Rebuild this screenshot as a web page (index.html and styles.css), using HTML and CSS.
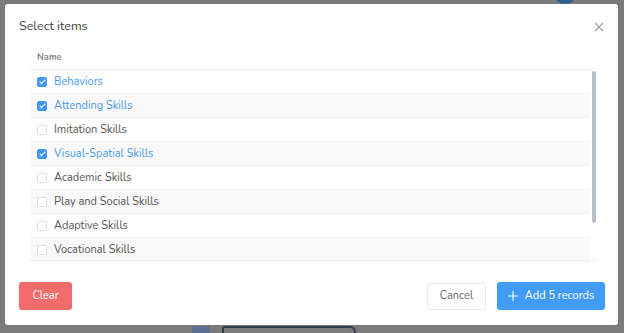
FILE: index.html
```
<!DOCTYPE html>
<html>
  <head>
    <meta charset="utf-8">
    <title>Select items</title>
    <link rel="stylesheet" href="styles.css">
  </head>
  <body>
    <div class="backdrop">
      <div class="peek peek-avatar"></div>
      <div class="peek peek-tile"></div>
      <div class="peek peek-art"></div>
      <div class="modal">
        <div class="modal-head">
          <span class="title">Select items</span>
          <svg class="close" width="10" height="10" viewBox="0 0 10 10">
            <path d="M1 1L9 9M9 1L1 9" stroke="#9c9c9c" stroke-width="1.1" fill="none"/>
          </svg>
        </div>
        <div class="table">
          <div class="thead">Name</div>
          <div class="tbody">
            <div class="row on"><span class="box"></span>Behaviors</div>
            <div class="row on"><span class="box"></span>Attending Skills</div>
            <div class="row"><span class="box"></span>Imitation Skills</div>
            <div class="row on"><span class="box"></span>Visual-Spatial Skills</div>
            <div class="row"><span class="box"></span>Academic Skills</div>
            <div class="row"><span class="box"></span>Play and Social Skills</div>
            <div class="row"><span class="box"></span>Adaptive Skills</div>
            <div class="row"><span class="box"></span>Vocational Skills</div>
          </div>
          <div class="thumb"></div>
        </div>
        <div class="modal-foot">
          <button class="btn btn-red">Clear</button>
          <div class="right">
            <button class="btn btn-plain">Cancel</button>
            <button class="btn btn-blue">
              <svg class="plus" width="10" height="10" viewBox="0 0 10 10">
                <path d="M5 0V10M0 5H10" stroke="#fff" stroke-width="1.1" fill="none"/>
              </svg>
              Add 5 records
            </button>
          </div>
        </div>
      </div>
    </div>
  </body>
</html>
```

FILE: styles.css
```
* {
  box-sizing: border-box;
}
body {
  margin: 0;
  background: #7b7b7b;
  font-family: Nunito, Lato, "Open Sans", sans-serif;
}
.backdrop {
  position: relative;
  width: 624px;
  height: 333px;
  padding: 4px 6px 8px 5px;
  overflow: hidden;
}
.peek {
  position: absolute;
}
.peek-avatar {
  top: -8px;
  left: 556px;
  width: 18px;
  height: 12px;
  border-radius: 50%;
  background: #2d5f93;
}
.peek-tile {
  top: 326px;
  left: 192px;
  width: 18px;
  height: 10px;
  background: #5d7090;
}
.peek-art {
  top: 326px;
  left: 222px;
  width: 134px;
  height: 12px;
  border: 2px solid #2f3a4c;
  border-bottom: none;
  border-radius: 3px 6px 0 0;
}
.modal {
  position: relative;
  height: 321px;
  background: #fff;
  border-radius: 3px;
  display: flex;
  flex-direction: column;
}
.modal-head {
  display: flex;
  justify-content: space-between;
  align-items: center;
  padding: 0 14px;
  height: 42px;
}
.title {
  font-size: 12.5px;
  color: #454545;
  margin-top: 1px;
}
.close {
  margin-top: 4px;
}
.table {
  position: relative;
  margin: 0 21px 0 25px;
  border-bottom: 1px solid #ededed;
}
.thead {
  height: 24px;
  padding-left: 7px;
  font-size: 9px;
  font-weight: 700;
  color: #8a8a8a;
  line-height: 23px;
  border-bottom: 1px solid #efefef;
}
.tbody {
  height: 190px;
  overflow: hidden;
  margin-right: 7px;
}
.thumb {
  position: absolute;
  top: 25px;
  right: 1px;
  width: 4px;
  height: 152px;
  border-radius: 2px;
  background: #b7bfcd;
}
.row {
  display: flex;
  align-items: center;
  height: 24px;
  padding-left: 7px;
  font-size: 11px;
  color: #555;
  border-bottom: 1px solid #f1f1f1;
}
.row:nth-child(even) {
  background: #f9f9f9;
}
.row.on {
  color: #4a9be8;
}
.box {
  width: 10px;
  height: 10px;
  margin-right: 7px;
  border: 1px solid #e0e0e0;
  border-radius: 2px;
  background: #fff;
  position: relative;
}
.row.on .box {
  background: #3f97ee;
  border-color: #3f97ee;
}
.row.on .box::after {
  content: "";
  position: absolute;
  left: 2.5px;
  top: 0.5px;
  width: 2px;
  height: 5px;
  border: solid #fff;
  border-width: 0 1px 1px 0;
  transform: rotate(45deg);
}
.modal-foot {
  margin-top: auto;
  display: flex;
  justify-content: space-between;
  align-items: center;
  padding: 0 13px 15px 14px;
}
.right {
  display: flex;
  gap: 11px;
  align-items: center;
}
.btn {
  font-family: inherit;
  font-size: 11px;
  line-height: 14px;
  height: 28px;
  border-radius: 3px;
  border: 1px solid transparent;
  padding: 0;
  cursor: pointer;
}
.btn-red {
  background: #f36c6c;
  color: #fff;
  width: 53px;
}
.btn-plain {
  background: #fff;
  color: #666;
  border-color: #e6e6e6;
  height: 27px;
  width: 59px;
}
.btn-blue {
  background: #409cf6;
  color: #fff;
  width: 108px;
  display: flex;
  align-items: center;
  justify-content: center;
}
.plus {
  margin-right: 7px;
}
```
